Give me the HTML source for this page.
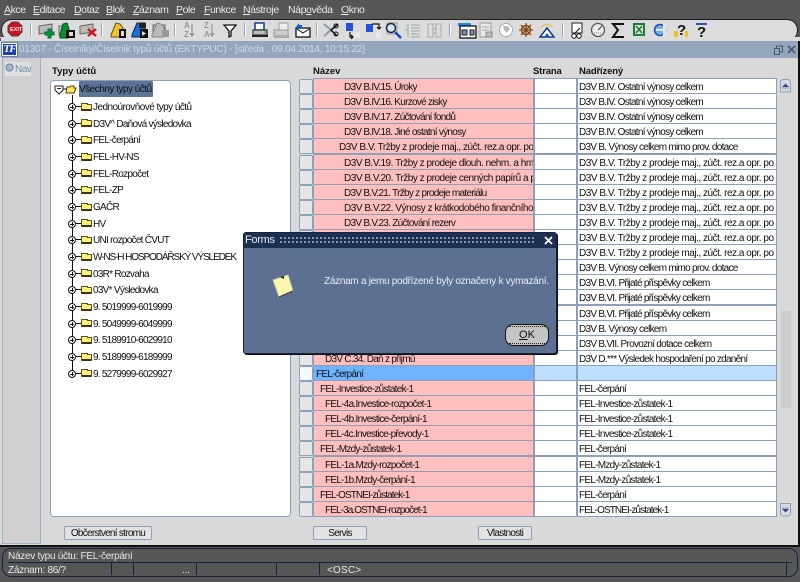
<!DOCTYPE html>
<html lang="cs"><head><meta charset="utf-8"><title>Forms</title>
<style>
html,body{margin:0;padding:0;background:#555}
#p{position:relative;width:800px;height:582px;overflow:hidden;background:#565656;font:10px "Liberation Sans",sans-serif;letter-spacing:-.72px;word-spacing:0;color:#111}
#p div,#p span.a{position:absolute;white-space:nowrap}
.m{top:4px;color:#e8e8e8;font-size:10.5px;letter-spacing:-.42px;word-spacing:0;line-height:12px}
.sep{width:1px;height:13px;top:23px;background:#8fa4c4;border-right:1px solid #fff}
.c0{left:299px;width:12px;height:13px;background:#e6e6e6;border:1px solid #8c9fbb;border-radius:2px}
.c1{left:314px;width:219px;height:14px;background:#ffbfbf;box-shadow:0 0 0 1px #8c9fbb;overflow:hidden;line-height:17px}
.c2{left:535px;width:41px;height:14px;background:#fff;box-shadow:0 0 0 1px #8c9fbb}
.c3{left:578px;width:198px;height:14px;background:#fff;box-shadow:0 0 0 1px #8c9fbb;overflow:hidden;line-height:17px;text-indent:1px}
.c1 b{font-weight:400;position:absolute;top:0}
.w{letter-spacing:-.47px;word-spacing:0}
.o{letter-spacing:-.9px}
.t{left:93px;line-height:12px;color:#111;margin-top:1px}
.n{letter-spacing:-.75px}
.pl{left:68px;width:6px;height:6px;margin-top:1px;border:1px solid #111;border-radius:50%;background:#fff}
.pl:before{content:"";position:absolute;left:1px;top:2.5px;width:4px;height:1px;background:#111}
.pl:after{content:"";position:absolute;left:2.5px;top:1px;width:1px;height:4px;background:#111}
.dh{left:76px;width:5px;height:1px;background:#111}
.f{left:81px;width:9px;height:4px;margin-top:1px;background:#fff27a;border:1px solid #5a5218;border-bottom:2px solid #3a3410;border-radius:1px}
.f:before{content:"";position:absolute;left:-1px;top:-2px;width:5px;height:1px;background:#fff27a;border:1px solid #5a5218;border-bottom:0}
.h{top:66px;font-weight:700;font-size:9.5px;letter-spacing:0;word-spacing:0;color:#111;line-height:12px}
.b{height:12px;background:#e2e2e2;border:1px solid #8c9fbb;border-radius:2px;text-align:center;line-height:13px;top:526px}
.st{color:#e8e8e8;font-size:10px;line-height:12px;letter-spacing:-.28px;word-spacing:0}
.vl{top:563px;width:1px;height:12px;background:#14233d}
</style></head><body><div id="p">

<div class="m" style="left:4px"><u>A</u>kce</div>
<div class="m" style="left:33px"><u>E</u>ditace</div>
<div class="m" style="left:74px"><u>D</u>otaz</div>
<div class="m" style="left:106px"><u>B</u>lok</div>
<div class="m" style="left:133px"><u>Z</u>áznam</div>
<div class="m" style="left:176px"><u>P</u>ole</div>
<div class="m" style="left:204px"><u>F</u>unkce</div>
<div class="m" style="left:243px"><u>N</u>ástroje</div>
<div class="m" style="left:288px">Náp<u>o</u>věda</div>
<div class="m" style="left:341px"><u>O</u>kno</div>

<!-- toolbar -->
<div style="left:1px;top:19px;width:797px;height:22px;background:#dcdcdc;border-radius:11px;border:1px solid #1c1c1c;border-bottom:0;box-sizing:border-box"></div>
<div style="left:0;top:37px;width:800px;height:4px;background:#dcdcdc"></div>
<div style="left:0;top:38px;width:1px;height:3px;background:#555"></div>
<div class="sep" style="left:30px"></div><div class="sep" style="left:101px"></div><div class="sep" style="left:174px"></div><div class="sep" style="left:244px"></div><div class="sep" style="left:316px"></div><div class="sep" style="left:449px"></div><div class="sep" style="left:562px"></div>
<svg style="position:absolute;left:0;top:18px" width="800" height="24" viewBox="0 18 800 24">
<path d="M12 22h6l4 4v6l-4 4h-6l-4-4v-6z" fill="#d40e1e" stroke="#444"/><text x="10" y="31" font-family="Liberation Sans" font-size="5.500" font-weight="700" fill="#fff" letter-spacing="0">EXIT</text>
<g fill="#bbb" stroke="#666"><path d="M39 26l13-2v8l-13 2z"/><path d="M59 26h9v9h-9z" fill="#ccc"/><path d="M80 26l13-2v8l-13 2z"/><path d="M153 25h12v8h-12z"/></g>
<path d="M48 29h3v3h3v3h-3v3h-3v-3h-3v-3h3z" fill="#0c9a2a" stroke="#064"/>
<path d="M60 34l3-10 4-1 2 6-1 9h-8z" fill="#0a8c2a" stroke="#052"/><rect x="66" y="30" width="9" height="8" fill="#111"/><rect x="69" y="32" width="4" height="4" fill="#ddd"/>
<path d="M88 29l8 7m0-7l-8 7" stroke="#d01818" stroke-width="2.400"/>
<path d="M111 35l5-12 4 1 3 4v9h-12z" fill="#f2c320" stroke="#553"/><rect x="119" y="29" width="7" height="9" fill="#111"/><rect x="121" y="31" width="3" height="5" fill="#ddd"/>
<path d="M132 35l5-12h8v14h-13z" fill="#1470d8" stroke="#124"/><rect x="139" y="23" width="7" height="5" fill="#222"/><rect x="140" y="29" width="8" height="9" fill="#111"/><path d="M142 31l4 2.500l-4 2.500z" fill="#ddd"/>
<path d="M152 35l5-12 4 1 3 4v9h-12z" fill="#bbb" stroke="#888"/><rect x="162" y="30" width="7" height="7" fill="#999"/>
<g font-family="Liberation Sans" font-size="8" fill="#999" font-weight="700"><text x="184" y="28">A</text><text x="184" y="37">Z</text><text x="204" y="28">Z</text><text x="204" y="37">A</text></g>
<path d="M192 24v12m-2-3l2 3 2-3M212 24v12m-2-3l2 3 2-3" stroke="#888" fill="none"/>
<path d="M224 25h12l-5 6v5l-2 1v-6z" fill="#fff" stroke="#111" stroke-width="1.300"/>
<rect x="255" y="23" width="9" height="7" fill="#fff" stroke="#123a8a" stroke-width="1.500"/><rect x="253" y="30" width="14" height="5" fill="#bbb" stroke="#222"/><rect x="252" y="35" width="16" height="2" fill="#222"/><circle cx="265" cy="32" r="1" fill="#2c3"/>
<rect x="279" y="23" width="9" height="8" fill="#eee" stroke="#999"/><rect x="274" y="30" width="14" height="6" fill="#ccc" stroke="#999"/><rect x="274" y="36" width="15" height="2" fill="#aaa"/>
<rect x="296" y="28" width="14" height="9" fill="#fff" stroke="#111" stroke-width="1.300"/><path d="M297 29l6 4 6-4" fill="none" stroke="#111"/><path d="M296 27l3-4v2h3v3h-3v2z" fill="#1560d0"/>
<path d="M324 24l7 6-7 6" fill="none" stroke="#8a9eaa" stroke-width="2"/><path d="M338 24l-7 6 6 6" fill="none" stroke="#111" stroke-width="1.500"/><circle cx="336" cy="26" r="2" fill="none" stroke="#111"/><circle cx="336" cy="34" r="2" fill="none" stroke="#111"/>
<rect x="346" y="23" width="7" height="8" fill="#2450d8"/><rect x="354" y="32" width="6" height="6" fill="#e8e8e8"/><path d="M350 32v5h3m-2-2l2 2-2 2" fill="none" stroke="#111" stroke-width="1.200"/>
<rect x="366" y="24" width="7" height="8" fill="#2450d8"/><rect x="376" y="30" width="5" height="8" fill="#e8e8e8"/><path d="M372 24h7v5m-2-2l2 2 2-2" fill="none" stroke="#111" stroke-width="1.200"/>
<rect x="387" y="23" width="10" height="11" fill="#eee" stroke="#999"/><circle cx="391" cy="28" r="4.500" fill="#cfe4f5" stroke="#223" stroke-width="1.500"/><path d="M395 32l6 6" stroke="#1048c0" stroke-width="2.500"/>
<path d="M408 24v13m3-12h9m-9 3h9m-9 3h9m-9 3h9m-9 3h9M405 30h3" stroke="#9aa" fill="none"/>
<path d="M428 24h5v13h-5zM436 24h5v13h-5zM433 29h3M433 33h3" stroke="#aaa" fill="#ddd"/>
<rect x="458" y="23" width="13" height="3" fill="#1a8ce0"/><rect x="460" y="26" width="16" height="12" fill="#fff" stroke="#111" stroke-width="1.300"/><path d="M462 30h5v5h-5zM470 30h4v5h-4z" fill="#88a" stroke="#123"/>
<rect x="480" y="23" width="11" height="14" fill="#e8e8e8" stroke="#999"/><path d="M482 27h7m-7 3h7" stroke="#aaa"/><rect x="486" y="32" width="6" height="5" fill="#bbb" stroke="#888"/>
<circle cx="506" cy="30" r="6.500" fill="#fff" stroke="#aaa"/><path d="M503 26l5 0 2 3-3 4-3-3z" fill="#bbb"/>
<circle cx="526" cy="30" r="4.500" fill="none" stroke="#8a4a14" stroke-width="1.500"/><path d="M526 23v14M519 30h14M521 25l10 10M531 25l-10 10" stroke="#8a4a14" stroke-width="1.300"/>
<path d="M540 37l7-9 7 9z" fill="#fff" stroke="#123a8a" stroke-width="1.500"/><path d="M544 37l3-4 3 4z" fill="#1560d0"/><path d="M541 27l6-3 6 3" stroke="#e0c020" fill="none"/>
<rect x="572" y="23" width="10" height="10" fill="#fff" stroke="#222"/><circle cx="574" cy="36" r="2.200" fill="#fff" stroke="#111"/><circle cx="579" cy="36" r="2.200" fill="#fff" stroke="#111"/><path d="M574 34l6-6" stroke="#111"/>
<circle cx="598" cy="30" r="6.500" fill="#eee" stroke="#555" stroke-width="1.300"/><path d="M598 30l4-4" stroke="#333"/><path d="M594 33h8" stroke="#888" stroke-dasharray="1 1"/>
<path d="M624 24h-11l5 6-5 7h11" fill="none" stroke="#111" stroke-width="2"/>
<rect x="633" y="23" width="12" height="13" fill="#1f7a3a"/><rect x="635" y="25" width="8" height="9" fill="#d8e8d8"/><path d="M636 26l6 7m0-7l-6 7" stroke="#1f7a3a" stroke-width="1.500"/>
<circle cx="660" cy="30" r="5.500" fill="#7ab0e8" stroke="#1450a8" stroke-width="1.500"/><rect x="656" y="29" width="7" height="1.500" fill="#fff"/><rect x="663" y="24" width="3" height="13" fill="#e4e4e4"/>
<rect x="674" y="31" width="4" height="6" fill="#f0c020"/><rect x="685" y="31" width="3" height="6" fill="#f0c020"/><text x="677" y="35" font-family="Liberation Sans" font-size="15" font-weight="700" fill="#111" letter-spacing="0">?</text>
<rect x="696" y="23" width="11" height="2" fill="#1a5cc0"/><text x="697" y="37" font-family="Liberation Sans" font-size="15" font-weight="700" fill="#111" letter-spacing="0">?</text>
</svg>

<!-- window -->
<div style="left:0;top:41px;width:798px;height:505px;background:#d9d9d9"></div>
<div style="left:798px;top:41px;width:2px;height:505px;background:#111"></div>
<div style="left:2px;top:41px;width:796px;height:17px;background:#93a6bd"></div>
<div style="left:1px;top:42px;width:17px;height:15px;background:#fff;border:1px solid #6a80a8;box-sizing:border-box"></div>
<div style="left:3px;top:44px;width:13px;height:11px;background:#1c3fb0;color:#fff;font:italic 700 11px/11px 'Liberation Serif',serif;letter-spacing:-1px;word-spacing:0;text-align:center">TF</div>
<div style="left:19px;top:44px;color:#d0d9e4;font-size:10px;line-height:12px;letter-spacing:-.2px;word-spacing:0">01307 - Číselníky/Číselník typů účtů (EKTYPUC) - [středa , 09.04.2014, 10:15:22]</div>
<svg style="position:absolute;left:771px;top:43px" width="26" height="13"><path d="M3.500 5.500h5v6h-5zM5.500 5.500v-2.500h6v6h-3" fill="none" stroke="#4a5a70"/><path d="M17 3l7 7m0-7l-7 7" stroke="#4a5a70" stroke-width="1.800"/></svg>

<div style="left:2px;top:58px;width:39px;height:486px;background:#d0d0d0;border:1px solid #9fb0c6;border-top:0;box-sizing:border-box"></div>
<div style="left:5px;top:62px;width:26px;height:14px;background:#e0e0e0"></div>
<svg style="position:absolute;left:5px;top:63px" width="10" height="10"><circle cx="4.500" cy="4.500" r="3.500" fill="#a8b8d0" stroke="#6a80a8"/></svg>
<div style="left:15px;top:64px;color:#7a8ea8;line-height:12px;letter-spacing:-.5px">Nav</div>

<div class="h" style="left:52px">Typy účtů</div>
<div class="h" style="left:313px">Název</div>
<div class="h" style="left:533px;letter-spacing:-.15px">Strana</div>
<div class="h" style="left:579px;letter-spacing:-.15px">Nadřízený</div>

<!-- tree -->
<div style="left:50px;top:80px;width:241px;height:437px;background:#fff;border:1px solid #8c9fbb;border-radius:4px;box-sizing:border-box"></div>
<div style="left:72px;top:95px;width:1px;height:279px;background:#111"></div>
<svg style="position:absolute;left:54px;top:84px" width="24" height="12"><path d="M1 2h8v4l-4 4-4-4z" fill="#fff" stroke="#222"/><path d="M3 4.500h4" stroke="#222"/><path d="M9 5h4" stroke="#111"/><path d="M13 3h3l1-1h3v2h2l-2 5h-8z" fill="#ffe860" stroke="#4a4210"/></svg>
<div style="left:79px;top:81px;width:74px;height:16px;background:#5d7397;border-radius:1px;line-height:17px;color:#111;letter-spacing:-.5px">Všechny typy účtů</div>

<div class="pl" style="top:102px"></div><div class="dh" style="top:106px"></div><div class="f" style="top:103px"></div><div class="t" style="top:101px;letter-spacing:-.55px">Jednoúrovňové typy účtů</div>
<div class="pl" style="top:119px"></div><div class="dh" style="top:123px"></div><div class="f" style="top:119px"></div><div class="t" style="top:118px">D3V^ Daňová výsledovka</div>
<div class="pl" style="top:135px"></div><div class="dh" style="top:139px"></div><div class="f" style="top:136px"></div><div class="t" style="top:134px">FEL-čerpání</div>
<div class="pl" style="top:152px"></div><div class="dh" style="top:156px"></div><div class="f" style="top:153px"></div><div class="t" style="top:151px">FEL-HV-NS</div>
<div class="pl" style="top:169px"></div><div class="dh" style="top:173px"></div><div class="f" style="top:169px"></div><div class="t" style="top:168px">FEL-Rozpočet</div>
<div class="pl" style="top:185px"></div><div class="dh" style="top:189px"></div><div class="f" style="top:186px"></div><div class="t" style="top:184px">FEL-ZP</div>
<div class="pl" style="top:202px"></div><div class="dh" style="top:206px"></div><div class="f" style="top:203px"></div><div class="t" style="top:201px">GAČR</div>
<div class="pl" style="top:219px"></div><div class="dh" style="top:223px"></div><div class="f" style="top:219px"></div><div class="t" style="top:218px">HV</div>
<div class="pl" style="top:235px"></div><div class="dh" style="top:239px"></div><div class="f" style="top:236px"></div><div class="t" style="top:234px">UNI rozpočet ČVUT</div>
<div class="pl" style="top:252px"></div><div class="dh" style="top:256px"></div><div class="f" style="top:253px"></div><div class="t" style="top:251px;letter-spacing:-1.1px">W-NS-H HOSPODÁŘSKÝ VÝSLEDEK</div>
<div class="pl" style="top:269px"></div><div class="dh" style="top:273px"></div><div class="f" style="top:269px"></div><div class="t" style="top:268px">03R* Rozvaha</div>
<div class="pl" style="top:285px"></div><div class="dh" style="top:289px"></div><div class="f" style="top:286px"></div><div class="t" style="top:284px">03V* Výsledovka</div>
<div class="pl" style="top:302px"></div><div class="dh" style="top:306px"></div><div class="f" style="top:303px"></div><div class="t n" style="top:301px">9. 5019999-6019999</div>
<div class="pl" style="top:319px"></div><div class="dh" style="top:323px"></div><div class="f" style="top:319px"></div><div class="t n" style="top:318px">9. 5049999-6049999</div>
<div class="pl" style="top:335px"></div><div class="dh" style="top:339px"></div><div class="f" style="top:336px"></div><div class="t n" style="top:334px">9. 5189910-6029910</div>
<div class="pl" style="top:352px"></div><div class="dh" style="top:356px"></div><div class="f" style="top:353px"></div><div class="t n" style="top:351px">9. 5189999-6189999</div>
<div class="pl" style="top:369px"></div><div class="dh" style="top:373px"></div><div class="f" style="top:369px"></div><div class="t n" style="top:368px">9. 5279999-6029927</div>

<!-- grid -->
<div class="c0" style="top:79px"></div><div class="c1" style="top:79px"><b style="left:30px">D3V B.IV.15. Úroky</b></div><div class="c2" style="top:79px"></div><div class="c3" style="top:79px">D3V B.IV. Ostatní výnosy celkem</div>
<div class="c0" style="top:94px"></div><div class="c1" style="top:94px"><b style="left:30px">D3V B.IV.16. Kurzové zisky</b></div><div class="c2" style="top:94px"></div><div class="c3" style="top:94px">D3V B.IV. Ostatní výnosy celkem</div>
<div class="c0" style="top:109px"></div><div class="c1" style="top:109px"><b style="left:30px">D3V B.IV.17. Zúčtování fondů</b></div><div class="c2" style="top:109px"></div><div class="c3" style="top:109px">D3V B.IV. Ostatní výnosy celkem</div>
<div class="c0" style="top:124px"></div><div class="c1" style="top:124px"><b style="left:30px">D3V B.IV.18. Jiné ostatní výnosy</b></div><div class="c2" style="top:124px"></div><div class="c3" style="top:124px">D3V B.IV. Ostatní výnosy celkem</div>
<div class="c0" style="top:139px"></div><div class="c1" style="top:139px"><b class="w" style="left:25px">D3V B.V. Tržby z prodeje maj., zúčt. rez.a opr. po</b></div><div class="c2" style="top:139px"></div><div class="c3" style="top:139px">D3V B. Výnosy celkem mimo prov. dotace</div>
<div class="c0" style="top:155px"></div><div class="c1" style="top:155px"><b class="w" style="left:30px">D3V B.V.19. Tržby z prodeje dlouh. nehm. a hmot</b></div><div class="c2" style="top:155px"></div><div class="c3 w" style="top:155px">D3V B.V. Tržby z prodeje maj., zúčt. rez.a opr. po</div>
<div class="c0" style="top:170px"></div><div class="c1" style="top:170px"><b class="w" style="left:30px">D3V B.V.20. Tržby z prodeje cenných papírů a po</b></div><div class="c2" style="top:170px"></div><div class="c3 w" style="top:170px">D3V B.V. Tržby z prodeje maj., zúčt. rez.a opr. po</div>
<div class="c0" style="top:185px"></div><div class="c1" style="top:185px"><b style="left:30px">D3V B.V.21. Tržby z prodeje materiálu</b></div><div class="c2" style="top:185px"></div><div class="c3 w" style="top:185px">D3V B.V. Tržby z prodeje maj., zúčt. rez.a opr. po</div>
<div class="c0" style="top:200px"></div><div class="c1" style="top:200px"><b class="w" style="left:30px">D3V B.V.22. Výnosy z krátkodobého finančního m</b></div><div class="c2" style="top:200px"></div><div class="c3 w" style="top:200px">D3V B.V. Tržby z prodeje maj., zúčt. rez.a opr. po</div>
<div class="c0" style="top:215px"></div><div class="c1" style="top:215px"><b style="left:30px">D3V B.V.23. Zúčtování rezerv</b></div><div class="c2" style="top:215px"></div><div class="c3 w" style="top:215px">D3V B.V. Tržby z prodeje maj., zúčt. rez.a opr. po</div>
<div class="c0" style="top:230px"></div><div class="c1" style="top:230px"></div><div class="c2" style="top:230px"></div><div class="c3 w" style="top:230px">D3V B.V. Tržby z prodeje maj., zúčt. rez.a opr. po</div>
<div class="c0" style="top:245px"></div><div class="c1" style="top:245px"></div><div class="c2" style="top:245px"></div><div class="c3 w" style="top:245px">D3V B.V. Tržby z prodeje maj., zúčt. rez.a opr. po</div>
<div class="c0" style="top:260px"></div><div class="c1" style="top:260px"></div><div class="c2" style="top:260px"></div><div class="c3" style="top:260px">D3V B. Výnosy celkem mimo prov. dotace</div>
<div class="c0" style="top:275px"></div><div class="c1" style="top:275px"></div><div class="c2" style="top:275px"></div><div class="c3" style="top:275px">D3V B.VI. Přijaté příspěvky celkem</div>
<div class="c0" style="top:290px"></div><div class="c1" style="top:290px"></div><div class="c2" style="top:290px"></div><div class="c3" style="top:290px">D3V B.VI. Přijaté příspěvky celkem</div>
<div class="c0" style="top:306px"></div><div class="c1" style="top:306px"></div><div class="c2" style="top:306px"></div><div class="c3" style="top:306px">D3V B.VI. Přijaté příspěvky celkem</div>
<div class="c0" style="top:321px"></div><div class="c1" style="top:321px"></div><div class="c2" style="top:321px"></div><div class="c3" style="top:321px">D3V B. Výnosy celkem</div>
<div class="c0" style="top:336px"></div><div class="c1" style="top:336px"></div><div class="c2" style="top:336px"></div><div class="c3" style="top:336px">D3V B.VII. Provozní dotace celkem</div>
<div class="c0" style="top:351px"></div><div class="c1" style="top:351px"><b style="left:11px">D3V C.34. Daň z příjmů</b></div><div class="c2" style="top:351px"></div><div class="c3" style="top:351px">D3V D.*** Výsledek hospodaření po zdanění</div>
<div class="c0" style="top:366px;background:#f4f8ff"></div><div class="c1" style="top:366px;background:#70b4ff"><b style="left:2px">FEL-čerpání</b></div><div class="c2" style="top:366px;background:#bfdfff"></div><div class="c3" style="top:366px;background:#bfdfff"></div>
<div class="c0" style="top:381px"></div><div class="c1" style="top:381px"><b style="left:6px">FEL-Investice-zůstatek-1</b></div><div class="c2" style="top:381px"></div><div class="c3" style="top:381px">FEL-čerpání</div>
<div class="c0" style="top:396px"></div><div class="c1" style="top:396px"><b style="left:11px">FEL-4a.Investice-rozpočet-1</b></div><div class="c2" style="top:396px"></div><div class="c3" style="top:396px">FEL-Investice-zůstatek-1</div>
<div class="c0" style="top:411px"></div><div class="c1" style="top:411px"><b style="left:11px">FEL-4b.Investice-čerpání-1</b></div><div class="c2" style="top:411px"></div><div class="c3" style="top:411px">FEL-Investice-zůstatek-1</div>
<div class="c0" style="top:426px"></div><div class="c1" style="top:426px"><b style="left:11px">FEL-4c.Investice-převody-1</b></div><div class="c2" style="top:426px"></div><div class="c3" style="top:426px">FEL-Investice-zůstatek-1</div>
<div class="c0" style="top:441px"></div><div class="c1" style="top:441px"><b style="left:6px">FEL-Mzdy-zůstatek-1</b></div><div class="c2" style="top:441px"></div><div class="c3" style="top:441px">FEL-čerpání</div>
<div class="c0" style="top:457px"></div><div class="c1" style="top:457px"><b style="left:11px">FEL-1a.Mzdy-rozpočet-1</b></div><div class="c2" style="top:457px"></div><div class="c3" style="top:457px">FEL-Mzdy-zůstatek-1</div>
<div class="c0" style="top:472px"></div><div class="c1" style="top:472px"><b style="left:11px">FEL-1b.Mzdy-čerpání-1</b></div><div class="c2" style="top:472px"></div><div class="c3" style="top:472px">FEL-Mzdy-zůstatek-1</div>
<div class="c0" style="top:487px"></div><div class="c1" style="top:487px"><b class="o" style="left:6px">FEL-OSTNEI-zůstatek-1</b></div><div class="c2" style="top:487px"></div><div class="c3" style="top:487px">FEL-čerpání</div>
<div class="c0" style="top:502px"></div><div class="c1" style="top:502px"><b class="o" style="left:11px">FEL-3a.OSTNEI-rozpočet-1</b></div><div class="c2" style="top:502px"></div><div class="c3 o" style="top:502px">FEL-OSTNEI-zůstatek-1</div>

<!-- scrollbar -->
<div style="left:781px;top:311px;width:10px;height:97px;background:#cdcdcd"></div>
<svg style="position:absolute;left:779px;top:78px" width="14" height="16"><path d="M1.500 5q0-3.500 3-3.500h4q3 0 3 3.500v9h-10z" fill="#d6dbe2" stroke="#8c9fbb"/><path d="M3 9h7l-3.500-3.500z" fill="#2a4a80"/><path d="M3 10h7" stroke="#8c9fbb"/></svg>
<svg style="position:absolute;left:779px;top:502px" width="14" height="16"><path d="M1.500 1.500h10v9q0 3.500-3 3.500h-4q-3 0-3-3.500z" fill="#d6dbe2" stroke="#8c9fbb"/><path d="M3 7h7l-3.500 3.500z" fill="#2a4a80"/><path d="M3 6h7" stroke="#8c9fbb"/></svg>

<div class="b" style="left:64px;width:86px">Občerstvení stromu</div>
<div class="b" style="left:313px;width:52px">Servis</div>
<div class="b" style="left:478px;width:52px">Vlastnosti</div>

<!-- status -->
<div style="left:0;top:545px;width:800px;height:2px;background:#111"></div>
<div style="left:2px;top:548px;width:796px;height:29px;border:1px solid #14233d;border-radius:9px;box-sizing:border-box"></div>
<div style="left:8px;top:562px;width:784px;height:1px;background:#14233d"></div>
<div class="st" style="left:8px;top:551px">Název typu účtu: FEL-čerpání</div>
<div class="st" style="left:8px;top:565px">Záznam: 86/?</div>
<div class="st" style="left:182px;top:565px">...</div>
<div class="st" style="left:327px;top:565px;letter-spacing:.2px">&lt;OSC&gt;</div>
<div class="vl" style="left:111px"></div><div class="vl" style="left:133px"></div><div class="vl" style="left:196px"></div><div class="vl" style="left:276px"></div><div class="vl" style="left:319px"></div><div class="vl" style="left:786px"></div>

<!-- dialog -->
<div style="left:243px;top:232px;width:314px;height:122px;background:#5c7191;border:1px solid #14233d;border-radius:3px;box-sizing:border-box;box-shadow:1px 1px 0 #111"></div>
<div style="left:244px;top:233px;width:312px;height:15px;background:#1e3052;border-radius:2px 2px 0 0"></div>
<div style="left:245px;top:234px;color:#e6ebf2;font-size:11px;line-height:13px;letter-spacing:-.3px">Forms</div>
<div style="left:279px;top:236px;width:256px;height:8px;background:radial-gradient(circle,#9aa8bc 0.800px,transparent 1.200px) 0 0/4px 4px"></div>
<svg style="position:absolute;left:543px;top:235px" width="12" height="11"><path d="M2 2l7 7m0-7l-7 7" stroke="#fff" stroke-width="1.800"/></svg>
<svg style="position:absolute;left:270px;top:272px" width="30" height="32"><path d="M3 8l15-5 5 16-14 6z" fill="#fdf6b0" stroke="#c8c6a0"/><path d="M9 25l14-6" stroke="#333"/><path d="M10 5l4-1 0 3z" fill="#222"/></svg>
<div style="left:324px;top:275px;color:#e8edf3;font-size:10px;line-height:13px;letter-spacing:-.28px;word-spacing:0">Záznam a jemu podřízené byly označeny k vymazání.</div>
<div style="left:505px;top:324px;width:44px;height:22px;background:#c4c4c4;border:1px solid #111;border-radius:8px;box-sizing:border-box;text-align:center;line-height:20px;color:#111;font-size:11px;letter-spacing:0"><u>O</u>K</div>
<div style="left:509px;top:326px;width:36px;height:18px;border-top:1px dotted #222;border-bottom:1px dotted #222;box-sizing:border-box"></div>

</div></body></html>
